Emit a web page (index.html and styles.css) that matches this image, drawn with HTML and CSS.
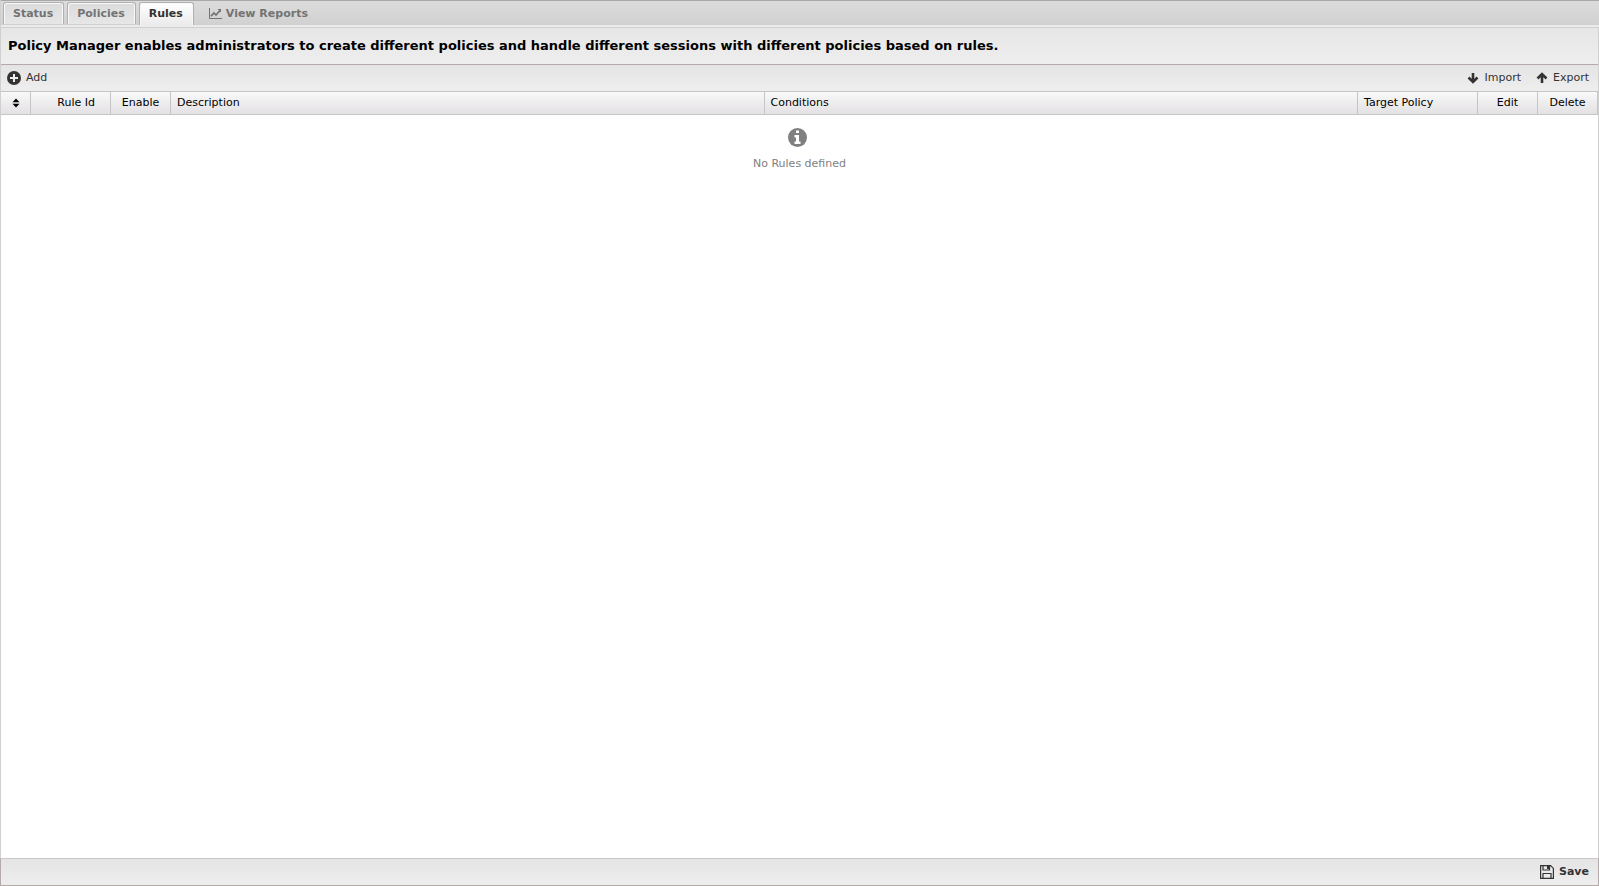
FILE: index.html
```html
<!DOCTYPE html>
<html lang="en">
<head>
<meta charset="utf-8">
<title>Policy Manager</title>
<link rel="stylesheet" href="styles.css">
</head>
<body>
<nav class="tabs">
  <button class="tab" type="button">Status</button>
  <button class="tab" type="button">Policies</button>
  <button class="tab active" type="button">Rules</button>
  <button class="tab plain" type="button">
    <svg width="13" height="11" viewBox="0 0 13 11" fill="none" stroke="currentColor"><path d="M.5 0v10.500H13"/><path d="M2 8.200l3-3.200 2 2L11 2.500" stroke-width="1.700"/><path d="M8.500 1H12v3.500z" fill="currentColor" stroke="none"/></svg>
    View Reports</button>
</nav>
<main class="panel">
  <h1 class="intro">Policy Manager enables administrators to create different policies and handle different sessions with different policies based on rules.</h1>
  <div class="toolbar">
    <button class="tool" type="button">
      <svg width="14" height="14" viewBox="0 0 14 14"><circle cx="7" cy="7" r="7" fill="currentColor"/><path d="M7 3v8M3 7h8" stroke="#eee" stroke-width="2"/></svg>
      Add</button>
    <span class="spacer"></span>
    <button class="tool" type="button">
      <svg width="12" height="12" viewBox="0 0 12 12" fill="none" stroke="currentColor" stroke-width="2.600"><path d="M6 1v8.500M1.500 5.500L6 10l4.500-4.500"/></svg>
      Import</button>
    <button class="tool" type="button">
      <svg width="12" height="12" viewBox="0 0 12 12" fill="none" stroke="currentColor" stroke-width="2.600"><path d="M6 11V2.500M1.500 6.500L6 2l4.500 4.500"/></svg>
      Export</button>
  </div>
  <table class="grid">
    <thead>
      <tr>
        <th class="sort" aria-label="Reorder"><svg width="8" height="10" viewBox="0 0 8 10"><path d="M4 .500l3.500 3.800h-7zM4 9.500l3.500-3.800h-7z"/></svg></th>
        <th class="id">Rule Id</th>
        <th class="narrow">Enable</th>
        <th>Description</th>
        <th>Conditions</th>
        <th class="target">Target Policy</th>
        <th class="narrow">Edit</th>
        <th class="narrow">Delete</th>
      </tr>
    </thead>
  </table>
  <div class="empty">
    <svg width="19" height="19" viewBox="0 0 19 19"><circle cx="9.500" cy="9.500" r="9.500" fill="currentColor"/><path d="M8 2.500h3v2.500H8zM6.500 7H11v6.500h1.500V16h-6v-2.500H8v-4H6.500z" fill="#fff"/></svg>
    <p>No Rules defined</p>
  </div>
</main>
<footer class="footer">
  <button class="tool save" type="button">
    <svg width="14" height="14" viewBox="0 0 14 14" fill="none" stroke="currentColor" stroke-width="1.200"><path d="M.6.600h10L13.400 3.400v10H.600z"/><path d="M3 .600V5h6.500V.600M3 13.400V8.500h8v4.900"/><path d="M7 1h2v3H7z" fill="currentColor" stroke="none"/></svg>
    Save</button>
</footer>
</body>
</html>
```
FILE: styles.css
```css
* {
  box-sizing: border-box;
}

body {
  margin: 0;
  min-height: 100vh;
  display: flex;
  flex-direction: column;
  font: 11px/14px "DejaVu Sans", sans-serif;
  color: #000;
  background: #fff;
}

button {
  font: inherit;
  color: #333;
  background: none;
  border: 0;
  padding: 0;
}

svg {
  display: block;
  flex: none;
}

.tabs {
  display: flex;
  align-items: flex-end;
  gap: 3px;
  height: 28px;
  padding: 2px 3px 2px 2px;
  border-left: 1px solid #d0d0d0;
  border-bottom: 1px solid #d0d0d0;
  background:
    linear-gradient(#a8a8a8, #a8a8a8) 0 0 / 100% 1px no-repeat,
    linear-gradient(#d0d0d0, #d0d0d0) 0 24px / 100% 1px no-repeat,
    linear-gradient(#ebebeb, #ebebeb) 0 25px / 100% 2px no-repeat,
    linear-gradient(#dcdcdc, #d0d0d0);
}

.tab {
  display: flex;
  align-items: center;
  gap: 4px;
  height: 22px;
  margin-bottom: 1px;
  padding: 0 10px 0 9px;
  font-weight: bold;
  color: #737373;
  border: 1px solid #b0b0b0;
  border-bottom: 0;
  border-radius: 3px 3px 0 0;
  background: linear-gradient(#dcdcdc, #e6e6e6);
  box-shadow: inset 1px 1px #f8f8f8, inset -1px 0 #f8f8f8;
}

.tab.active {
  height: 23px;
  margin-bottom: 0;
  color: #333;
  background: linear-gradient(#fff, #ebebeb);
}

.tab.plain {
  margin-left: 2px;
  border-color: transparent;
  background: none;
  box-shadow: none;
}

.panel {
  flex: 1;
  display: flex;
  flex-direction: column;
  border: solid #d0d0d0;
  border-width: 0 1px;
}

.intro {
  margin: 0;
  padding: 10px 7px;
  font-size: 13px;
  line-height: 16px;
  border-bottom: 1px solid #b5aaaa;
  background: linear-gradient(#e6e6e6, #eee);
}

.toolbar {
  display: flex;
  align-items: center;
  gap: 15px;
  height: 26px;
  padding: 0 9px 0 6px;
  background: linear-gradient(#e4e4e4, #eee);
}

.spacer {
  flex: 1;
}

.tool {
  display: flex;
  align-items: center;
  gap: 5px;
}

.grid {
  width: 100%;
  table-layout: fixed;
  border-collapse: separate;
  border-spacing: 0;
}

.grid th {
  height: 24px;
  padding: 0 6px;
  font-weight: normal;
  text-align: left;
  border: solid #c5c5c5;
  border-width: 1px 1px 1px 0;
  background: linear-gradient(#f9f9f9, #e3e1e3);
}

.grid .sort {
  width: 30px;
  padding: 0 10px 0 11px;
}

.grid .id {
  width: 80px;
  padding-right: 15px;
  text-align: right;
}

.grid .narrow {
  width: 60px;
  text-align: center;
}

.grid .target {
  width: 120px;
}

.empty {
  display: flex;
  flex-direction: column;
  align-items: center;
  gap: 10px;
  padding-top: 13px;
  color: #808080;
}

.empty svg {
  margin-right: 4px;
}

.empty p {
  margin: 0;
}

.footer {
  display: flex;
  justify-content: flex-end;
  align-items: center;
  height: 28px;
  padding-right: 9px;
  border: 1px solid #b5aaaa;
  border-top-color: #c8c8c8;
  background: linear-gradient(#e4e4e4, #eee);
}

.save {
  font-weight: bold;
}
```
